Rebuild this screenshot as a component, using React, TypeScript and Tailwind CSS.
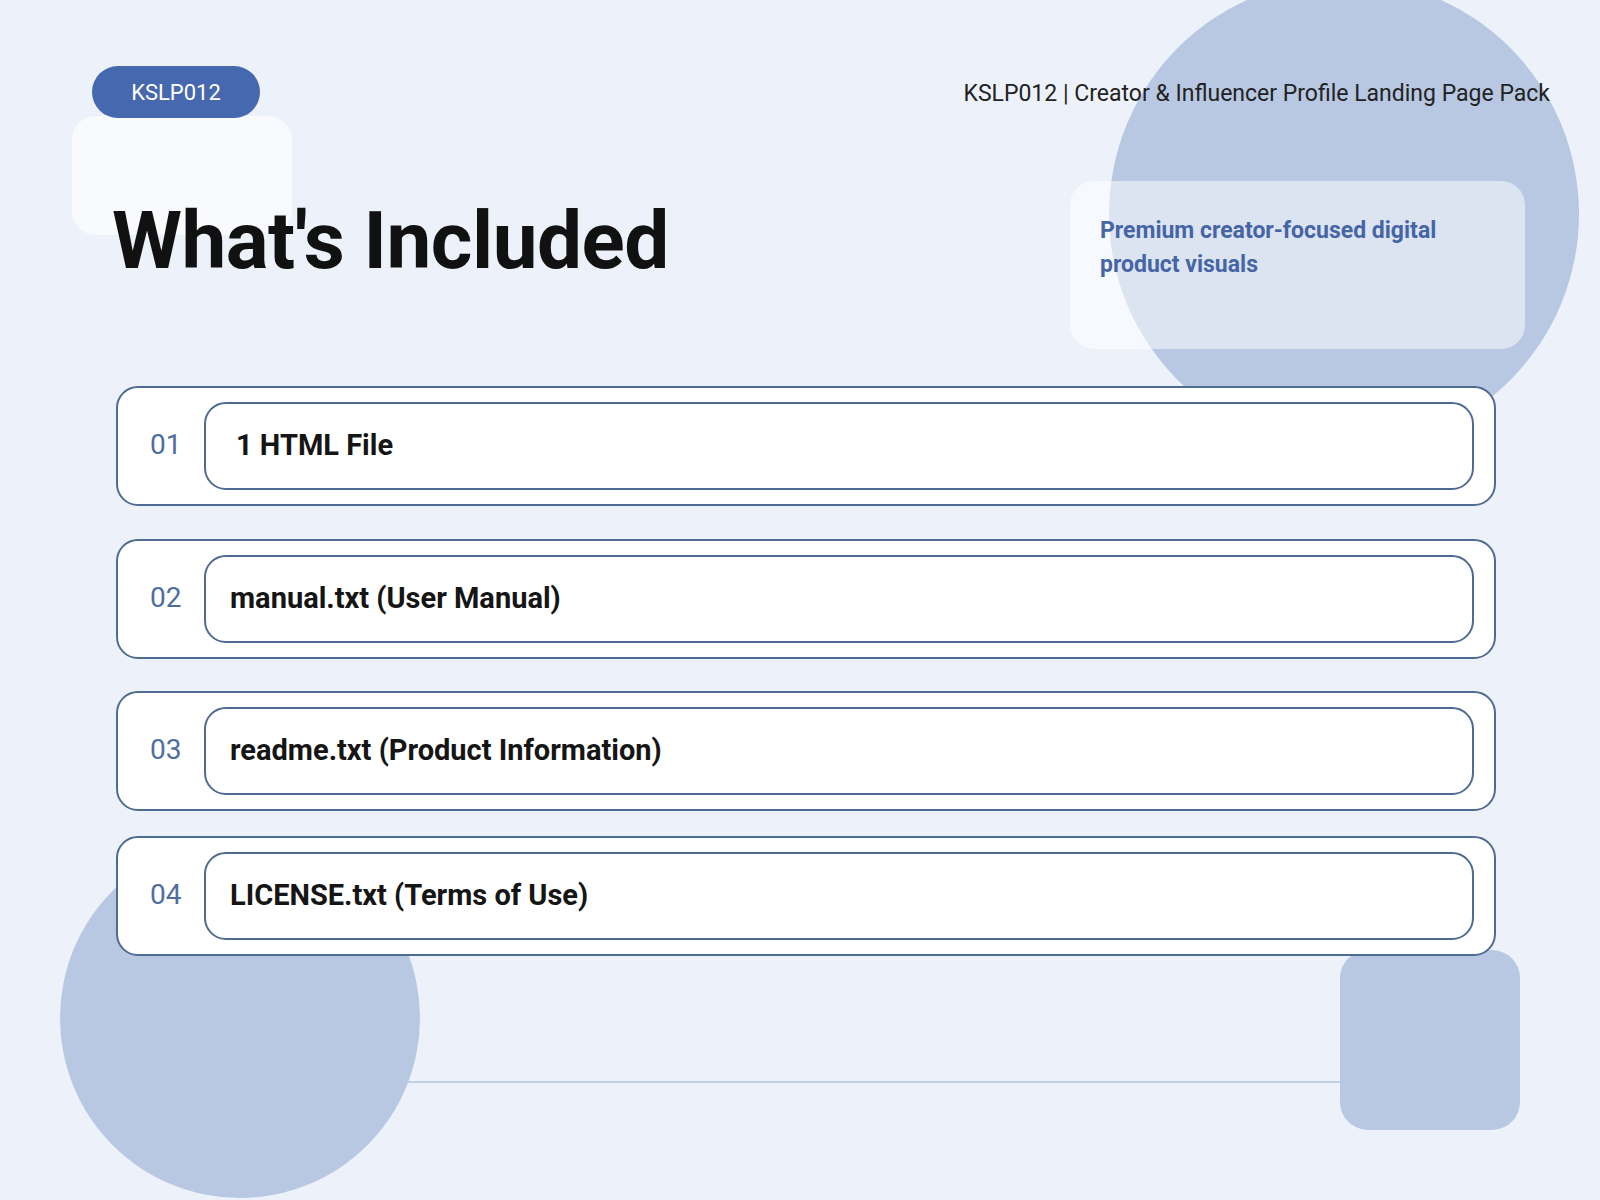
import React from 'react';

const items = [
  { n: '01', label: '1 HTML File', pad: 'pl-[30px]', mt: 'mt-0' },
  { n: '02', label: 'manual.txt (User Manual)', pad: 'pl-[24px]', mt: 'mt-[33px]' },
  { n: '03', label: 'readme.txt (Product Information)', pad: 'pl-[24px]', mt: 'mt-[32px]' },
  { n: '04', label: 'LICENSE.txt (Terms of Use)', pad: 'pl-[24px]', mt: 'mt-[25px]' },
];

export default function App() {
  return (
    <div className="relative w-[1600px] h-[1200px] overflow-hidden bg-[#edf2fa] font-[Roboto,sans-serif] text-[#151515]">
      {/* decorative shapes */}
      <div className="absolute left-[1109px] top-[-21px] w-[470px] h-[470px] rounded-full bg-[#b8c8e3]" />
      <div className="absolute left-[60px] top-[838px] w-[360px] h-[360px] rounded-full bg-[#b8c8e3]" />
      <div className="absolute left-[1340px] top-[950px] w-[180px] h-[180px] rounded-[28px] bg-[#b8c8e3]" />
      <div className="absolute left-[408px] top-[1081px] w-[932px] h-[2px] bg-[#c2d0e6]" />
      <div className="absolute left-[72px] top-[116px] w-[220px] h-[119px] rounded-[24px] bg-white/60" />

      <div className="relative px-[92px] pt-[66px]">
        <div className="flex items-start justify-between">
          <div className="h-[52px] w-[168px] rounded-full bg-[#4568ae] text-white text-[22px] flex items-center justify-center">
            KSLP012
          </div>
          <div className="mr-[-42px] mt-[11px] text-[23px] text-[#222]">
            KSLP012 | Creator &amp; Influencer Profile Landing Page Pack
          </div>
        </div>

        <div className="flex items-start justify-between mt-[63px]">
          <h1 className="ml-[20px] mt-[10px] text-[80px] leading-[100px] font-bold tracking-[-0.5px] text-[#111]">
            What's Included
          </h1>
          <div className="mr-[-17px] w-[455px] h-[168px] rounded-[24px] bg-white/50 px-[30px] pt-[33px] text-[23px] leading-[34px] font-bold text-[#4565a6]">
            Premium creator-focused digital product visuals
          </div>
        </div>

        <div className="ml-[24px] mr-[12px] mt-[37px] flex flex-col">
          {items.map((it) => (
            <div
              key={it.n}
              className={`${it.mt} h-[120px] rounded-[22px] border-2 border-[#4f6b94] bg-white flex items-start pt-[14px] pl-[32px] pr-[20px]`}
            >
              <div className="w-[54px] pt-[22px] text-[28px] text-[#4f6ea0]">{it.n}</div>
              <div className={`flex-1 h-[88px] rounded-[22px] border-2 border-[#4f6b94] flex items-center ${it.pad} text-[29px] font-bold text-[#151515]`}>
                {it.label}
              </div>
            </div>
          ))}
        </div>
      </div>
    </div>
  );
}
